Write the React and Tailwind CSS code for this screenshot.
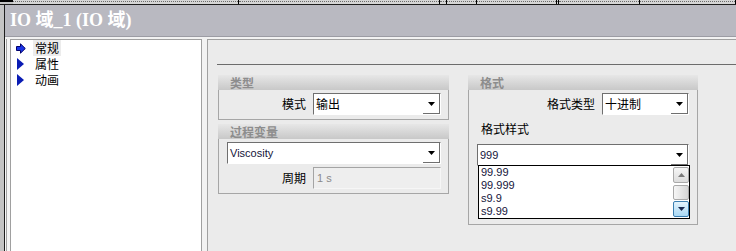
import React from "react";

const cjk = "font-['Noto_Sans_CJK_SC',sans-serif]";
const latin = "font-['Liberation_Sans','Noto_Sans_CJK_SC',sans-serif]";

const DownArrow = ({ color = "#000" }) => (
  <svg width="7" height="4" viewBox="0 0 7 4">
    <path d="M0 0H7L3.5 4Z" fill={color} />
  </svg>
);

const UpArrow = ({ color = "#000" }) => (
  <svg width="7" height="4" viewBox="0 0 7 4">
    <path d="M0 4H7L3.5 0Z" fill={color} />
  </svg>
);

// sunken win-style combo box
const Combo = ({ value, className = "", textClass = cjk, size = "text-[12px]" }) => (
  <div
    className={`flex h-[22px] border border-t-[#6f6f6f] border-l-[#6f6f6f] border-r-white border-b-white bg-white ${className}`}
  >
    <div className={`flex-1 pl-[2px] leading-[20px] text-black ${textClass} ${size}`}>{value}</div>
    <div className="flex w-[17px] items-center justify-center border-r border-b border-[#6f6f6f] bg-white">
      <DownArrow />
    </div>
  </div>
);

const GroupBox = ({ title, children, bodyClass = "" }) => (
  <div className="flex flex-col">
    <div className={`h-[15px] bg-linear-to-b from-[#e7e7e7] to-[#c8c8c8] pl-[12px] text-[12px] font-bold leading-[15px] text-[#8d8d8d] ${cjk}`}>
      {title}
    </div>
    <div className={`border-x border-b border-[#a6a6a6] ${bodyClass}`}>{children}</div>
  </div>
);

const TreeItem = ({ label, active, icon }) => (
  <div className="flex h-[16px] items-center">
    <div className="flex w-[22px] pl-[5px]">{icon}</div>
    <div className={`h-[16px] overflow-hidden px-[2px] text-[12px] leading-[16px] text-black ${cjk} ${active ? "bg-[#ececec]" : ""}`}>
      {label}
    </div>
  </div>
);

const BlockArrow = () => (
  <svg width="10" height="11" viewBox="0 0 10 11">
    <path d="M0.5 3.5H4.5V0.8L9.3 5.5L4.5 10.2V7.5H0.5Z" fill="#1a34e6" stroke="#00006a" strokeWidth="1" />
  </svg>
);

const Tri = () => (
  <svg width="7" height="12" viewBox="0 0 7 12" className="ml-[1px]">
    <path d="M0 0L7 6L0 12Z" fill="#0a1cb4" />
  </svg>
);

const formats = ["99.99", "99.999", "s9.9", "s9.99"];

const TopStrip = () => {
  const segs = [225, 200, 6, 29, 79, 1, 80, 95];
  return (
    <div className="flex h-[5px] border-b border-[#1e1e1e] bg-[#d6d6d6]">
      <div className="w-[15px] border-t-2 border-black bg-[#c4c4c4]" />
      {segs.map((w, i) => (
        <div key={i} className="flex">
          <div className="mt-[1px] h-[2px] border-t border-dotted border-[#6c6c6c]" style={{ width: w }} />
          <div className="w-px bg-black" />
        </div>
      ))}
      <div className="mt-[1px] h-[2px] flex-1 border-t border-dotted border-[#6c6c6c]" />
    </div>
  );
};

export default function App() {
  return (
    <div className="flex h-[251px] w-[736px] flex-col overflow-hidden bg-[#f0f0f0]">
      <TopStrip />
      <div className="flex flex-1">
        {/* left edge */}
        <div className="w-[5px] border-r border-[#1e1e1e] bg-[#c4c4c4]" />

        <div className="flex flex-1 flex-col">
          {/* title bar */}
          <div className="flex h-[32px] items-center border-b border-[#9c9ca4] bg-[#b9b9c1] pl-[5px]">
            <span className="font-['Liberation_Serif','Noto_Sans_CJK_SC',serif] text-[18px] font-bold text-white">
              IO 域_1 (IO 域)
            </span>
          </div>
          <div className="h-[2px] bg-[#f2f2f2]" />

          <div className="flex flex-1">
            {/* margin */}
            <div className="flex w-[5px]">
              <div className="w-px bg-[#f8f8f8]" />
              <div className="w-px bg-[#a4a4a4]" />
              <div className="flex-1 bg-[#f4f4f4]" />
            </div>

            {/* tree */}
            <div className="w-[192px] border-x border-t border-[#a0a0a0] bg-white">
              <TreeItem label="常规" active icon={<BlockArrow />} />
              <TreeItem label="属性" icon={<Tri />} />
              <TreeItem label="动画" icon={<Tri />} />
            </div>

            {/* splitter */}
            <div className="w-[5px] bg-[#f2f2f2]" />

            {/* properties */}
            <div className="flex flex-1 flex-col border-l border-t border-[#a0a0a0] bg-[#ebebeb]">
              <div className="ml-[9px] mt-[24px] h-px bg-[#6c6c6c]" />
              <div className="mt-[10px] flex items-start gap-[19px] pl-[10px]">
                <div className="flex w-[231px] flex-col gap-[4px]">
                  <GroupBox title="类型" bodyClass="pt-[3px] pb-[4px] pr-[7px]">
                    <div className="flex items-center justify-end gap-[7px]">
                      <span className={`text-[12px] text-black ${cjk}`}>模式</span>
                      <Combo value="输出" className="w-[128px]" />
                    </div>
                  </GroupBox>
                  <GroupBox title="过程变量" bodyClass="flex flex-col gap-[3px] pt-[3px] pb-[4px] pl-[8px] pr-[7px]">
                    <Combo value="Viscosity" textClass={`${latin} !text-[#14143a]`} size="text-[11px]" />
                    <div className="flex items-center justify-end gap-[7px]">
                      <span className={`text-[12px] text-black ${cjk}`}>周期</span>
                      <div
                        className={`h-[22px] w-[128px] border border-t-[#a4a4a4] border-l-[#a4a4a4] border-r-[#f6f6f6] border-b-[#f6f6f6] bg-[#eeeeee] pl-[3px] text-[11px] leading-[20px] text-[#8a8a8a] ${latin}`}
                      >
                        1 s
                      </div>
                    </div>
                  </GroupBox>
                </div>

                <div className="w-[230px]">
                  <GroupBox title="格式" bodyClass="pt-[3px] pb-[5px] pr-[8px]">
                    <div className="flex items-center justify-end gap-[7px]">
                      <span className={`text-[12px] text-black ${cjk}`}>格式类型</span>
                      <Combo value="十进制" className="w-[87px]" />
                    </div>
                    <div className={`mt-[6px] h-[16px] pl-[12px] text-[12px] leading-[16px] text-black ${cjk}`}>格式样式</div>
                    <div className="mt-[7px] pl-[8px]">
                      <Combo value="999" textClass={`${latin} !text-[#14143a]`} size="text-[11px]" />
                      <div className="relative -mt-px ml-[1px] flex h-[54px] w-[212px] border border-black bg-white">
                        <div className={`flex-1 pl-[2px] text-[11px] leading-[13px] text-[#14143a] ${latin}`}>
                          {formats.map((f) => (
                            <div key={f} className="h-[13px]">{f}</div>
                          ))}
                        </div>
                        <div className="flex w-[16px] flex-col pt-px">
                          <div className="flex h-[16px] items-center justify-center rounded-[2px] border border-[#a9a9a9] bg-linear-to-b from-[#f6f6f6] to-[#dcdcdc]">
                            <UpArrow color="#7a7a7a" />
                          </div>
                          <div className="mt-[2px] h-[15px] rounded-[2px] border border-[#a9a9a9] bg-linear-to-r from-[#f6f6f6] to-[#d6d6d6]" />
                          <div className="mt-px flex h-[16px] items-center justify-center rounded-[2px] border border-[#3c7fb1] bg-linear-to-b from-[#e4f4fd] to-[#a9d8f4]">
                            <DownArrow color="#1a2a50" />
                          </div>
                        </div>
                      </div>
                    </div>
                  </GroupBox>
                </div>
              </div>
            </div>
          </div>
        </div>
      </div>
    </div>
  );
}
